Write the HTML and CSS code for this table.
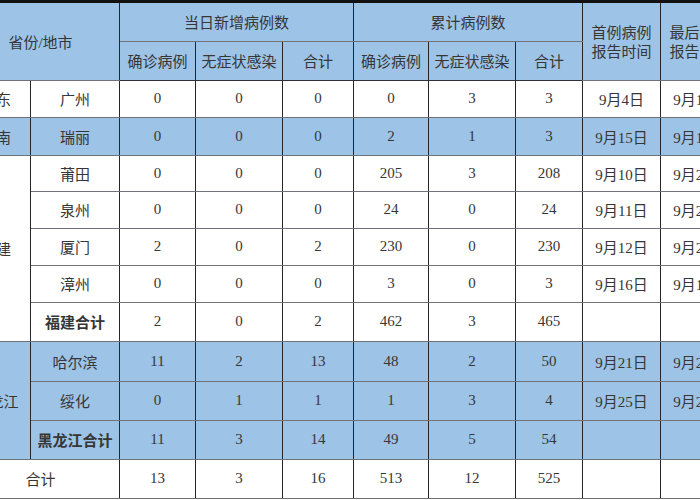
FILE: index.html
```html
<!DOCTYPE html>
<html lang="zh">
<head>
<meta charset="utf-8">
<link rel="stylesheet" href="styles.css">
</head>
<body>
<div class="topbar"></div>
<table class="stats">
  <colgroup>
    <col class="c-prov"><col class="c-city"><col class="c-a"><col class="c-b"><col class="c-c">
    <col class="c-d"><col class="c-e"><col class="c-f"><col class="c-g"><col class="c-h">
  </colgroup>
  <thead>
    <tr class="h1">
      <th colspan="2" rowspan="2">省份/地市</th>
      <th colspan="3">当日新增病例数</th>
      <th colspan="3">累计病例数</th>
      <th rowspan="2" class="two">首例病例<br>报告时间</th>
      <th rowspan="2" class="two">最后病例<br>报告时间</th>
    </tr>
    <tr class="h2">
      <th>确诊病例</th><th>无症状感染</th><th>合计</th>
      <th>确诊病例</th><th>无症状感染</th><th>合计</th>
    </tr>
  </thead>
  <tbody>
    <tr class="r37">
      <td>广东</td><td>广州</td><td>0</td><td>0</td><td>0</td><td>0</td><td>3</td><td>3</td><td>9月4日</td><td>9月16日</td>
    </tr>
    <tr class="r38 blue">
      <td>云南</td><td>瑞丽</td><td>0</td><td>0</td><td>0</td><td>2</td><td>1</td><td>3</td><td>9月15日</td><td>9月17日</td>
    </tr>
    <tr class="r36">
      <td rowspan="5">福建</td><td>莆田</td><td>0</td><td>0</td><td>0</td><td>205</td><td>3</td><td>208</td><td>9月10日</td><td>9月26日</td>
    </tr>
    <tr class="r37">
      <td>泉州</td><td>0</td><td>0</td><td>0</td><td>24</td><td>0</td><td>24</td><td>9月11日</td><td>9月25日</td>
    </tr>
    <tr class="r37">
      <td>厦门</td><td>2</td><td>0</td><td>2</td><td>230</td><td>0</td><td>230</td><td>9月12日</td><td>9月26日</td>
    </tr>
    <tr class="r37">
      <td>漳州</td><td>0</td><td>0</td><td>0</td><td>3</td><td>0</td><td>3</td><td>9月16日</td><td>9月19日</td>
    </tr>
    <tr class="r39">
      <td class="b">福建合计</td><td>2</td><td>0</td><td>2</td><td>462</td><td>3</td><td>465</td><td></td><td></td>
    </tr>
    <tr class="r40 blue">
      <td rowspan="3">黑龙江</td><td>哈尔滨</td><td>11</td><td>2</td><td>13</td><td>48</td><td>2</td><td>50</td><td>9月21日</td><td>9月26日</td>
    </tr>
    <tr class="r39 blue">
      <td>绥化</td><td>0</td><td>1</td><td>1</td><td>1</td><td>3</td><td>4</td><td>9月25日</td><td>9月26日</td>
    </tr>
    <tr class="r39 blue">
      <td class="b">黑龙江合计</td><td>11</td><td>3</td><td>14</td><td>49</td><td>5</td><td>54</td><td></td><td></td>
    </tr>
    <tr class="r39">
      <td colspan="2">合计</td><td>13</td><td>3</td><td>16</td><td>513</td><td>12</td><td>525</td><td></td><td></td>
    </tr>
  </tbody>
</table>
</body>
</html>
```
FILE: styles.css
```css
html, body {
  margin: 0;
  padding: 0;
  overflow: hidden;
  background: #ffffff;
}
.topbar {
  height: 3px;
  background: #111111;
}
.stats {
  margin-left: -39px;
  table-layout: fixed;
  width: 777px;
  border-collapse: collapse;
  font-family: "Liberation Serif", "Noto Sans CJK SC", serif;
  font-size: 15px;
  color: #363636;
}
.c-prov { width: 69px; }
.c-city { width: 89px; }
.c-a { width: 76px; }
.c-b { width: 87px; }
.c-c { width: 71px; }
.c-d { width: 75px; }
.c-e { width: 87px; }
.c-f { width: 67px; }
.c-g { width: 78px; }
.c-h { width: 78px; }
.stats th,
.stats td {
  padding: 0;
  text-align: center;
  vertical-align: middle;
  white-space: nowrap;
  overflow: hidden;
  border-left: 1px solid #262626;
  border-right: 1px solid #262626;
  border-top: 1px solid #6f7378;
  border-bottom: 1px solid #6f7378;
  font-weight: 400;
}
.stats thead th {
  background: #9dc3e6;
  border-top: none;
}
.stats thead .h2 th {
  border-bottom: 1px solid #2e3238;
}
.stats th.two {
  line-height: 19px;
  padding-top: 4px;
}
.h1 { height: 38px; }
.h2 { height: 39px; }
.r36 { height: 36px; }
.r37 { height: 37px; }
.r38 { height: 38px; }
.r39 { height: 39px; }
.r40 { height: 40px; }
.blue td { background: #9dc3e6; }
.stats td.b { font-weight: 700; }
```
